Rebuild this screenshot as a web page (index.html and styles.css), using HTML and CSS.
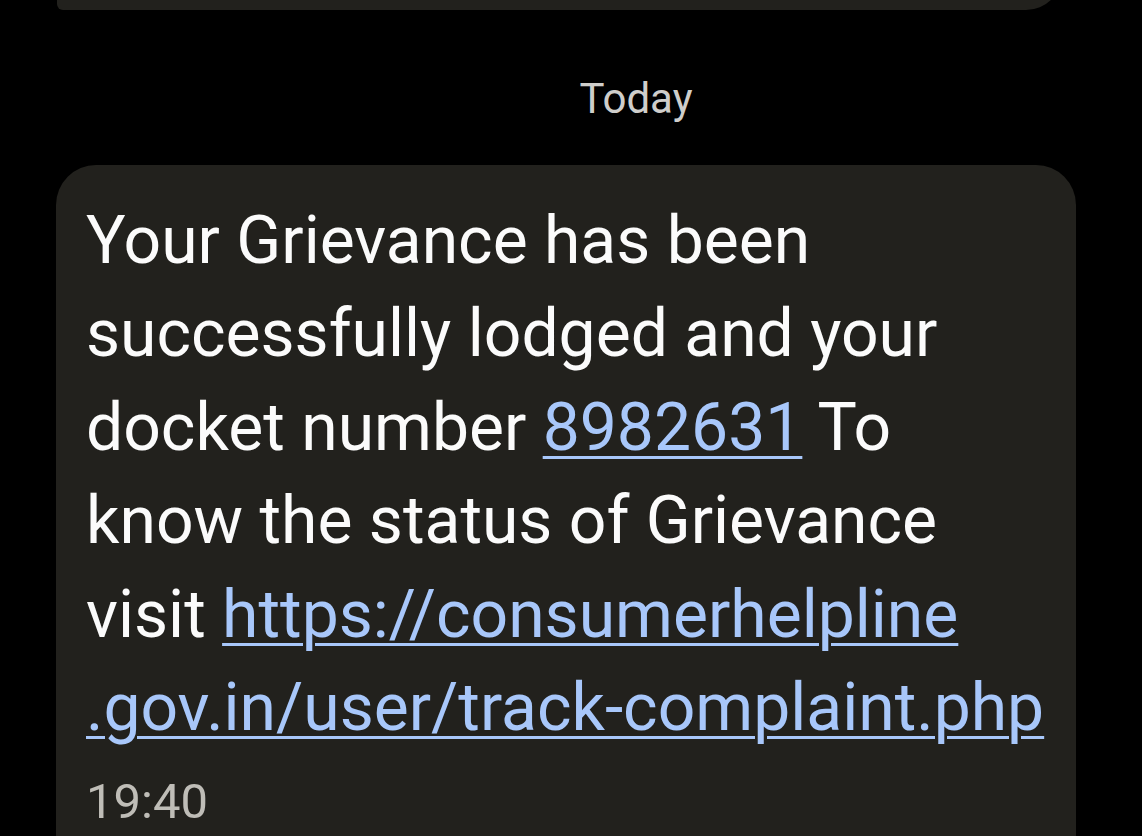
FILE: index.html
```html
<!DOCTYPE html>
<html lang="en">
<head>
<meta charset="utf-8">
<title>Messages</title>
<link rel="stylesheet" href="styles.css">
</head>
<body>
<main class="thread">
  <div class="bubble bubble-prev"></div>
  <div class="date">Today</div>
  <article class="bubble bubble-msg">
    <p class="msg-text">Your Grievance has been<br>successfully lodged and your<br>docket number <a class="link" href="#">8982631</a> To<br>know the status of Grievance<br>visit <a class="link" href="#">https://consumerhelpline<br>.gov.in/user/track-complaint.php</a></p>
    <div class="time">19:40</div>
  </article>
</main>
</body>
</html>
```

FILE: styles.css
```css
html, body {
  margin: 0;
  padding: 0;
  background: #000;
  height: 100%;
  overflow: hidden;
}

body {
  font-family: Roboto, "Noto Sans", sans-serif;
  color: #fff;
}

.thread {
  display: flex;
  flex-direction: column;
  align-items: flex-start;
}

.bubble {
  background: #22211d;
}

.bubble-prev {
  width: 1005px;
  height: 100px;
  margin-top: -90px;
  margin-left: 57px;
  border-radius: 36px 36px 36px 6px;
}

.date {
  align-self: stretch;
  padding-left: 130px;
  margin-top: 64px;
  text-align: center;
  font-size: 42px;
  line-height: 50px;
  color: #cfcecb;
}

.bubble-msg {
  margin-top: 41px;
  margin-left: 56px;
  width: 1020px;
  box-sizing: border-box;
  padding: 29px 30px 60px 30px;
  border-radius: 40px;
}

.msg-text {
  margin: 0;
  font-size: 66px;
  line-height: 93.4px;
  color: #fbfbfb;
}

.link {
  color: #a8c7fa;
  text-decoration: underline;
  text-decoration-thickness: 3px;
  text-underline-offset: 6px;
}

.time {
  margin-top: 18px;
  font-size: 49px;
  line-height: 60px;
  color: #bfbdb7;
}
```
